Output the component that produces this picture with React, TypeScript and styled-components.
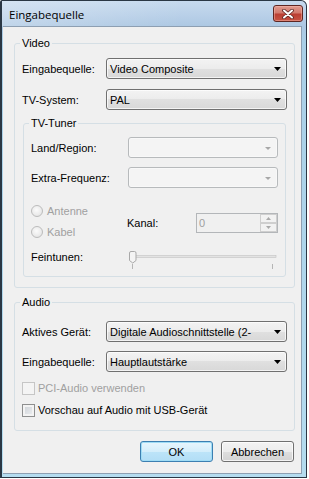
import React from 'react';
import styled, { createGlobalStyle } from 'styled-components';

const GlobalStyle = createGlobalStyle`
  html, body {
    margin: 0;
    padding: 0;
    background: #fff;
  }
  body {
    width: 309px;
    height: 479px;
    overflow: hidden;
    font-family: "Liberation Sans", Arial, sans-serif;
    font-size: 11px;
    color: #000;
  }
  * {
    box-sizing: border-box;
  }
`;

const Frame = styled.div`
  width: 307px;
  height: 478px;
  display: flex;
  flex-direction: column;
  border: 1px solid #2a3744;
  border-left-width: 2px;
  border-radius: 2px 6px 0 0;
  background: linear-gradient(180deg, #c6daee 0px, #b9d0e8 14px, #adc8e3 25px, #a9cfe7 40px, #b4dcef 100%);
  padding: 0 4px 3px 1px;
`;

const TitleBar = styled.div`
  height: 25px;
  margin: 0 -4px 0 -1px;
  padding: 4px 3px 0 7px;
  display: flex;
  justify-content: space-between;
  align-items: flex-start;
  background: linear-gradient(100deg, rgba(255, 255, 255, 0.25), rgba(255, 255, 255, 0) 60%);
`;

const Title = styled.span`
  font-family: "Open Sans", "Noto Sans", sans-serif;
  font-size: 11.5px;
  line-height: 16px;
  padding-top: 2px;
  color: #000;
`;

const CloseButton = styled.div`
  width: 30px;
  height: 17px;
  border: 1px solid #5e2622;
  border-radius: 3px;
  background: linear-gradient(180deg, #e09a8f 0%, #d27a6d 45%, #bb3f33 55%, #c75444 100%);
  box-shadow: inset 0 0 0 1px rgba(250, 190, 180, 0.45);
  display: flex;
  align-items: center;
  justify-content: center;
`;

const Client = styled.div`
  flex: 1;
  background: #f0f0f0;
  border: 1px solid #8d9fb2;
  border-left: none;
  padding: 9px 6px 0 11px;
  display: flex;
  flex-direction: column;
`;

const Group = styled.fieldset<{ $top?: number; $bottom?: number; $inset?: number; $gap?: number }>`
  margin: ${(p) => (p.$gap ?? 0)}px ${(p) => p.$inset ?? 0}px 0;
  padding: ${(p) => p.$top ?? 8}px 7px ${(p) => p.$bottom ?? 10}px;
  border: 1px solid #d5dfe5;
  border-radius: 3px;
  min-inline-size: 0;
  display: flex;
  flex-direction: column;
`;

const Legend = styled.legend`
  padding: 0 2px;
  margin-left: -2px;
  line-height: 14px;
  font-size: 11px;
`;

const Rows = styled.div<{ $gap: number }>`
  display: flex;
  flex-direction: column;
  gap: ${(p) => p.$gap}px;
`;

const Row = styled.div<{ $label: number }>`
  display: grid;
  grid-template-columns: ${(p) => p.$label}px 1fr;
  align-items: center;
  height: 21px;
`;

const Label = styled.span<{ $disabled?: boolean }>`
  color: ${(p) => (p.$disabled ? '#a0a0a0' : '#000')};
  white-space: nowrap;
`;

const Combo = styled.div<{ $disabled?: boolean }>`
  height: 21px;
  border: 1px solid ${(p) => (p.$disabled ? '#b7babc' : '#707070')};
  border-radius: 3px;
  background: ${(p) =>
    p.$disabled
      ? '#f4f4f4'
      : 'linear-gradient(180deg, #f3f3f3 0%, #ececec 50%, #e0e0e0 50%, #d8d8d8 100%)'};
  box-shadow: inset 0 0 0 1px ${(p) => (p.$disabled ? '#f8f8f8' : 'rgba(255,255,255,0.7)')};
  display: flex;
  align-items: center;
  justify-content: space-between;
  padding: 1px ${(p) => (p.$disabled ? 6 : 5)}px 0 3px;
  white-space: nowrap;
  overflow: hidden;
`;

const RadioBlock = styled.div`
  margin-top: 12px;
  display: grid;
  grid-template-columns: 96px 69px 1fr;
  align-items: center;
`;

const RadioList = styled.div`
  display: flex;
  flex-direction: column;
`;

const RadioRow = styled.div`
  height: 21px;
  display: flex;
  align-items: center;
  gap: 4px;
  color: #a0a0a0;
`;

const RadioDot = styled.span`
  width: 12px;
  height: 12px;
  border-radius: 50%;
  border: 1px solid #bcbcbc;
  background: radial-gradient(circle at 45% 40%, #fbfbfb 0%, #ececec 55%, #dedede 100%);
`;

const KanalLabel = styled.span`
  padding-top: 4px;
`;

const Spin = styled.div`
  margin-top: 4px;
  height: 20px;
  border: 1px solid #b3b6b9;
  background: #f0f0f0;
  display: flex;
  align-items: stretch;
  justify-content: space-between;
  padding-left: 2px;
  color: #a0a0a0;
`;

const SpinValue = styled.span`
  line-height: 18px;
`;

const SpinButtons = styled.div`
  width: 17px;
  display: flex;
  flex-direction: column;
`;

const SpinButton = styled.div`
  flex: 1;
  border: 1px solid #cfcfcf;
  background: #f2f2f2;
  display: flex;
  align-items: center;
  justify-content: center;
`;

const SliderRow = styled.div`
  margin-top: 6px;
  display: grid;
  grid-template-columns: 98px 1fr;
  align-items: start;
  height: 22px;
`;

const SliderLabel = styled.span`
  line-height: 18px;
`;

const Checks = styled.div`
  margin-top: 5px;
  display: flex;
  flex-direction: column;
`;

const CheckRow = styled.div<{ $disabled?: boolean }>`
  height: 22px;
  display: flex;
  align-items: center;
  gap: 3px;
  color: ${(p) => (p.$disabled ? '#a0a0a0' : '#000')};
`;

const CheckBox = styled.span<{ $disabled?: boolean }>`
  width: 13px;
  height: 13px;
  border: 1px solid ${(p) => (p.$disabled ? '#c6c6c6' : '#8e8f8f')};
  background: ${(p) => (p.$disabled ? '#f4f4f4' : 'linear-gradient(135deg, #cdd1d6 0%, #eef0f2 100%)')};
  box-shadow: inset 0 0 0 2px ${(p) => (p.$disabled ? '#f4f4f4' : '#f3f3f3')};
`;

const ButtonRow = styled.div`
  margin-top: 10px;
  padding-right: 1px;
  display: flex;
  justify-content: flex-end;
  gap: 8px;
`;

const Button = styled.div<{ $primary?: boolean }>`
  width: 73px;
  height: 21px;
  border: 1px solid ${(p) => (p.$primary ? '#3c7fb1' : '#707070')};
  border-radius: 3px;
  background: ${(p) =>
    p.$primary
      ? 'linear-gradient(180deg, #e8f6fd 0%, #d4eefb 50%, #bde4f9 50%, #b2def6 100%)'
      : 'linear-gradient(180deg, #f3f3f3 0%, #ececec 50%, #dedede 50%, #d3d3d3 100%)'};
  box-shadow: inset 0 0 0 1px ${(p) => (p.$primary ? '#9fdcf5' : 'rgba(255,255,255,0.75)')};
  display: flex;
  align-items: center;
  justify-content: center;
  line-height: 14px;
`;

const Arrow = ({ disabled }: { disabled?: boolean }) => (
  <svg width={disabled ? 6 : 7} height={disabled ? 3 : 4} viewBox={disabled ? '0 0 6 3' : '0 0 7 4'}>
    <polygon points={disabled ? '0,0 6,0 3,3' : '0,0 7,0 3.5,4'} fill={disabled ? '#a7a7a7' : '#000'} />
  </svg>
);

const SpinArrow = ({ up }: { up?: boolean }) => (
  <svg width="5" height="3" viewBox="0 0 5 3">
    <polygon points={up ? '0,3 5,3 2.5,0' : '0,0 5,0 2.5,3'} fill="#a9a9a9" />
  </svg>
);

const Slider = () => (
  <svg width="148" height="22" viewBox="0 0 148 22">
    <rect x="2" y="7.5" width="145" height="2" fill="#e3e3e3" stroke="#c2c2c2" strokeWidth="0.6" />
    <line x1="3.5" y1="16" x2="3.5" y2="21" stroke="#b5b5b5" />
    <line x1="143.5" y1="16" x2="143.5" y2="21" stroke="#b5b5b5" />
    <path d="M0.5 5 Q0.5 3.5 2 3.5 L5.5 3.5 Q7 3.5 7 5 L7 12.5 L3.75 15 L0.5 12.5 Z" fill="#f4f4f4" stroke="#a9a9a9" />
  </svg>
);

const CloseGlyph = () => (
  <svg width="12" height="10" viewBox="0 0 12 10">
    <path d="M2 1.5 L10 8.5 M10 1.5 L2 8.5" stroke="#5a2420" strokeWidth="3.6" strokeLinecap="round" />
    <path d="M2 1.5 L10 8.5 M10 1.5 L2 8.5" stroke="#fff" strokeWidth="2" strokeLinecap="round" />
  </svg>
);

const ComboField = ({ value, disabled }: { value?: string; disabled?: boolean }) => (
  <Combo $disabled={disabled}>
    <span>{value}</span>
    <Arrow disabled={disabled} />
  </Combo>
);

export default function App() {
  return (
    <>
      <GlobalStyle />
      <Frame>
        <TitleBar>
          <Title>Eingabequelle</Title>
          <CloseButton>
            <CloseGlyph />
          </CloseButton>
        </TitleBar>
        <Client>
          <Group>
            <Legend>Video</Legend>
            <Rows $gap={10}>
              <Row $label={84}>
                <Label>Eingabequelle:</Label>
                <ComboField value="Video Composite" />
              </Row>
              <Row $label={84}>
                <Label>TV-System:</Label>
                <ComboField value="PAL" />
              </Row>
            </Rows>

            <Group $gap={6} $inset={1} $top={7} $bottom={6}>
              <Legend>TV-Tuner</Legend>
              <Rows $gap={9}>
                <Row $label={97}>
                  <Label>Land/Region:</Label>
                  <ComboField disabled />
                </Row>
                <Row $label={97}>
                  <Label>Extra-Frequenz:</Label>
                  <ComboField disabled />
                </Row>
              </Rows>

              <RadioBlock>
                <RadioList>
                  <RadioRow>
                    <RadioDot />
                    Antenne
                  </RadioRow>
                  <RadioRow>
                    <RadioDot />
                    Kabel
                  </RadioRow>
                </RadioList>
                <KanalLabel>Kanal:</KanalLabel>
                <Spin>
                  <SpinValue>0</SpinValue>
                  <SpinButtons>
                    <SpinButton>
                      <SpinArrow up />
                    </SpinButton>
                    <SpinButton>
                      <SpinArrow />
                    </SpinButton>
                  </SpinButtons>
                </Spin>
              </RadioBlock>

              <SliderRow>
                <SliderLabel>Feintunen:</SliderLabel>
                <Slider />
              </SliderRow>
            </Group>
          </Group>

          <Group $gap={7} $top={12} $bottom={9}>
            <Legend>Audio</Legend>
            <Rows $gap={9}>
              <Row $label={84}>
                <Label>Aktives Gerät:</Label>
                <ComboField value="Digitale Audioschnittstelle (2-" />
              </Row>
              <Row $label={84}>
                <Label>Eingabequelle:</Label>
                <ComboField value="Hauptlautstärke" />
              </Row>
            </Rows>
            <Checks>
              <CheckRow $disabled>
                <CheckBox $disabled />
                PCI-Audio verwenden
              </CheckRow>
              <CheckRow>
                <CheckBox />
                Vorschau auf Audio mit USB-Gerät
              </CheckRow>
            </Checks>
          </Group>

          <ButtonRow>
            <Button $primary>OK</Button>
            <Button>Abbrechen</Button>
          </ButtonRow>
        </Client>
      </Frame>
    </>
  );
}
